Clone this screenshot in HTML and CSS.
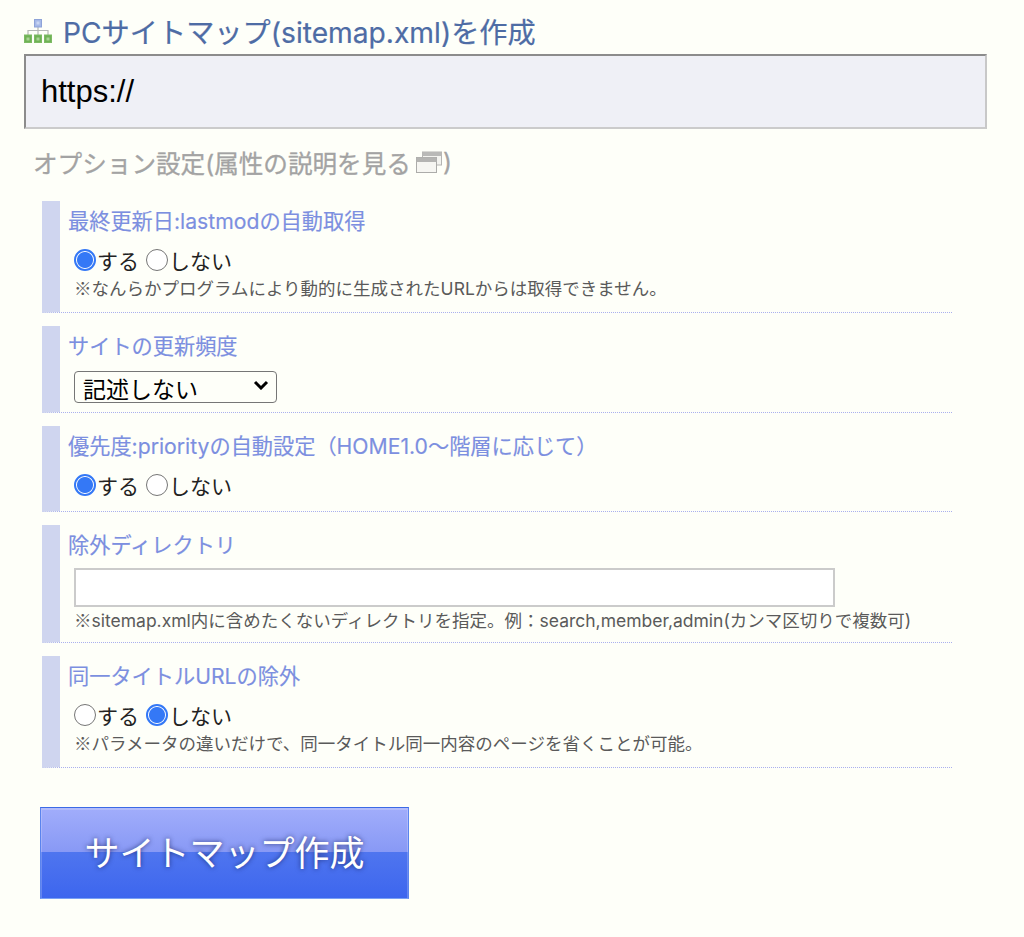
FILE: index.html
```html
<!DOCTYPE html>
<html lang="ja">
<head>
<meta charset="utf-8">
<title>PCサイトマップ(sitemap.xml)を作成</title>
<link rel="stylesheet" href="styles.css">
</head>
<body>
<form class="page">
  <h2 class="heading">
    <svg class="tree-icon" viewBox="0 0 28 24" width="28" height="24" aria-hidden="true">
      <path d="M14 8v8M4 16v-4.500h20v4.500" fill="none" stroke="#b5b8b5" stroke-width="1.2"/>
      <rect x="10.500" y="0.500" width="7" height="7.500" fill="#a6b9e8" stroke="#8ea3d8"/>
      <rect x="12.500" y="2.500" width="3" height="3" fill="#c9d6f2"/>
      <rect x="0.500" y="16" width="7" height="7.500" fill="#6fb255" stroke="#7dbb64"/>
      <rect x="10.500" y="16" width="7" height="7.500" fill="#6fb255" stroke="#7dbb64"/>
      <rect x="20.500" y="16" width="7" height="7.500" fill="#6fb255" stroke="#7dbb64"/>
      <rect x="2.500" y="18.500" width="3" height="3" fill="#a9d394"/>
      <rect x="12.500" y="18.500" width="3" height="3" fill="#a9d394"/>
      <rect x="22.500" y="18.500" width="3" height="3" fill="#a9d394"/>
    </svg>
    <span>PCサイトマップ(sitemap.xml)を作成</span>
  </h2>
  <input class="url-input" type="text" value="https://">
  <p class="options-title">オプション設定(属性の説明を見る
    <svg class="win-icon" viewBox="0 0 26 22" width="26" height="22" aria-hidden="true">
      <rect x="6.500" y="1" width="19" height="13" fill="#f3f3ef" stroke="#b4b4b2"/>
      <rect x="6.500" y="1" width="19" height="4" fill="#b9b9b7"/>
      <rect x="0.500" y="6.500" width="20" height="15" fill="#f6f6f2" stroke="#acacaa"/>
      <rect x="0.500" y="6.500" width="20" height="4.500" fill="#b4b4b2"/>
    </svg>)</p>

  <section class="opt">
    <h3 class="opt-title">最終更新日:lastmodの自動取得</h3>
    <div class="radios">
      <label class="radio"><input type="radio" name="lastmod" checked>する</label>
      <label class="radio"><input type="radio" name="lastmod">しない</label>
    </div>
    <p class="note"><span class="mark">※</span>なんらかプログラムにより動的に生成されたURLからは取得できません。</p>
  </section>

  <section class="opt">
    <h3 class="opt-title">サイトの更新頻度</h3>
    <span class="select-wrap">
      <select class="select"><option>記述しない</option><option>毎日</option><option>毎週</option></select>
      <svg class="chevron" viewBox="0 0 16 10" width="16" height="10" aria-hidden="true"><path d="M2 2l6 6 6-6" fill="none" stroke="#000" stroke-width="3"/></svg>
    </span>
  </section>

  <section class="opt">
    <h3 class="opt-title">優先度:priorityの自動設定（HOME1.0〜階層に応じて）</h3>
    <div class="radios">
      <label class="radio"><input type="radio" name="priority" checked>する</label>
      <label class="radio"><input type="radio" name="priority">しない</label>
    </div>
  </section>

  <section class="opt">
    <h3 class="opt-title">除外ディレクトリ</h3>
    <input class="text-input" type="text">
    <p class="note"><span class="mark">※</span>sitemap.xml内に含めたくないディレクトリを指定。例：search,member,admin(カンマ区切りで複数可)</p>
  </section>

  <section class="opt">
    <h3 class="opt-title">同一タイトルURLの除外</h3>
    <div class="radios">
      <label class="radio"><input type="radio" name="same">する</label>
      <label class="radio"><input type="radio" name="same" checked>しない</label>
    </div>
    <p class="note"><span class="mark">※</span>パラメータの違いだけで、同一タイトル同一内容のページを省くことが可能。</p>
  </section>

  <button class="submit" type="button">サイトマップ作成</button>
</form>
</body>
</html>
```
FILE: styles.css
```css
* { box-sizing: border-box; }
html, body { margin: 0; height: 100%; }
body {
  background: #fefff9;
  font-family: Inter, "Noto Sans CJK JP", sans-serif;
  color: #000;
}
.page { padding: 12px 0 0 24px; width: 1024px; }
.heading {
  display: flex;
  align-items: center;
  gap: 11px;
  margin: 0;
  height: 37px;
  font-size: 28.2px;
  font-weight: 400;
  color: #4e6ca5;
  white-space: nowrap;
  -webkit-text-stroke: 0.2px #4e6ca5;
}
.url-input {
  display: block;
  width: 963px;
  height: 75px;
  margin: 5px 0 0;
  padding: 0 15px;
  background: #eff0f6;
  border: 2px solid #cbcbcb;
  border-top-color: #8c8c8c;
  border-left-color: #8c8c8c;
  border-right-color: #c8c8c8;
  font: 31px "Liberation Sans", sans-serif;
  color: #000;
  border-radius: 0;
  outline: none;
}
.options-title {
  display: flex;
  align-items: center;
  margin: 17px 0 0 9px;
  height: 32px;
  font-size: 24.6px;
  font-weight: 400;
  color: #a3a3a3;
  white-space: nowrap;
  -webkit-text-stroke: 0.3px #a3a3a3;
}
.win-icon { margin: 0 1px 0 5px; }
.opt {
  width: 910px;
  margin: 0 0 13px 18px;
  padding: 7px 0 0 8px;
  border-left: 18px solid #cfd5ef;
  border-bottom: 1px dotted #aab0ee;
}
.options-title + .opt { margin-top: 23px; }
.opt-title {
  margin: 0;
  font-size: 21.2px;
  line-height: 27px;
  font-weight: 400;
  color: #7c8fe0;
  white-space: nowrap;
  -webkit-text-stroke: 0.15px #7c8fe0;
}
.radios {
  display: flex;
  gap: 7px;
  margin: 12px 0 0 6px;
  height: 26px;
  align-items: center;
}
.radios:last-child { margin-bottom: 13px; }
.radio {
  display: flex;
  align-items: center;
  font-size: 21px;
  color: #222;
  white-space: nowrap;
}
.radio input {
  appearance: none;
  -webkit-appearance: none;
  width: 22px;
  height: 22px;
  margin: 0 1px 0 0;
  border: 1.5px solid #767676;
  border-radius: 50%;
  background: #fff;
}
.radio input:checked {
  border: 2px solid #3478f6;
  background: radial-gradient(circle, #3478f6 0 7.5px, #fff 8.5px);
}
.note {
  margin: 3px 0 0 6px;
  font-size: 17.5px;
  line-height: 24px;
  color: #5a5a5a;
  white-space: nowrap;
  height: 36px;
}
.mark { font-family: "Noto Sans CJK JP", sans-serif; }
.select-wrap {
  position: relative;
  display: block;
  width: 203px;
  height: 32px;
  margin: 11px 0 9px 6px;
}
.select {
  appearance: none;
  -webkit-appearance: none;
  display: block;
  width: 100%;
  height: 100%;
  padding: 5px 0 0 8px;
  background: #fefff9;
  border: 1.5px solid #767676;
  border-radius: 4px;
  font: 23px "Liberation Sans", "Noto Sans CJK JP", sans-serif;
  color: #000;
}
.chevron {
  position: absolute;
  right: 8px;
  top: 9px;
  pointer-events: none;
}
.text-input {
  display: block;
  width: 761px;
  height: 39px;
  margin: 9px 0 0 6px;
  background: #fff;
  border: 2px solid #cbcbcb;
  border-radius: 0;
  outline: none;
}
.text-input + .note { margin-top: 1px; height: 34px; }
.submit {
  display: block;
  width: 369px;
  height: 92px;
  margin: 39px 0 0 16px;
  padding: 0 0 5px;
  border: 1px solid;
  border-color: #3c6ae6 #5a84ee #79a0f4 #5a84ee;
  background: linear-gradient(#a1adfb 0, #8899f5 49%, #4f75ef 49%, #3d66ee 100%);
  box-shadow: inset 0 1px 0 1px rgba(255,255,255,.2);
  color: #fff;
  font: 35px "Liberation Sans", "Noto Sans CJK JP", sans-serif;
  text-shadow: 0 0 5px rgba(20,30,90,.75);
}
```
